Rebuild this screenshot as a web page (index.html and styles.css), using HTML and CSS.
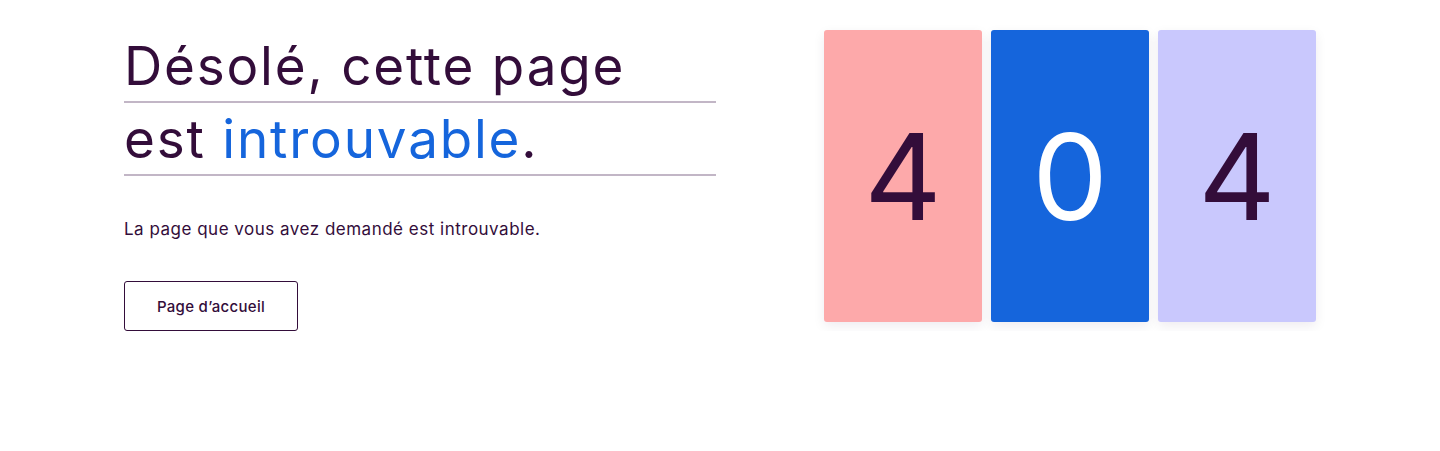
FILE: index.html
```html
<!DOCTYPE html>
<html lang="fr">
<head>
<meta charset="utf-8">
<title>Page introuvable</title>
<link rel="stylesheet" href="styles.css">
</head>
<body>
<main class="page">
  <section class="intro">
    <h1 class="title">Désolé, cette page<br>est <span class="accent">introuvable</span>.</h1>
    <p class="lead">La page que vous avez demandé est introuvable.</p>
    <a class="btn" href="#">Page d’accueil</a>
  </section>
  <section class="digits">
    <div class="card card-pink">4</div>
    <div class="card card-blue">0</div>
    <div class="card card-lilac">4</div>
  </section>
</main>
</body>
</html>
```

FILE: styles.css
```css
* { box-sizing: border-box; }
html, body { margin: 0; background: #fff; }
body {
  font-family: Inter, "Noto Sans", sans-serif;
  color: #330d3a;
}
.page {
  display: flex;
  align-items: flex-start;
  padding: 30px 0 0 124px;
  gap: 108px;
}
.intro {
  width: 592px;
  flex: none;
}
.title {
  margin: 0;
  font-family: Inter, sans-serif;
  font-weight: 400;
  font-size: 53px;
  line-height: 73px;
  letter-spacing: 1.8px;
  background-image: repeating-linear-gradient(to bottom, transparent 0, transparent 71px, #c2b6c6 71px, #c2b6c6 73px);
}
.accent { color: #1565dc; }
.lead {
  margin: 41px 0 0;
  font-size: 17px;
  line-height: 24px;
  letter-spacing: 0.5px;
}
.btn {
  display: inline-flex;
  align-items: center;
  justify-content: center;
  margin-top: 40px;
  width: 174px;
  height: 50px;
  border: 1px solid #330d3a;
  border-radius: 3px;
  color: #330d3a;
  text-decoration: none;
  font-size: 15px;
  font-weight: 500;
  letter-spacing: 0.3px;
}
.digits {
  display: flex;
  gap: 9px;
}
.card {
  width: 158px;
  height: 292px;
  border-radius: 3px;
  display: flex;
  align-items: center;
  justify-content: center;
  font-size: 120px;
  font-weight: 400;
  box-shadow: 0 4px 12px rgba(51, 13, 58, 0.08);
}
.card-pink { background: #fda9aa; color: #330d3a; }
.card-blue { background: #1565dc; color: #fff; }
.card-lilac { background: #c9c8fd; color: #330d3a; }
```
